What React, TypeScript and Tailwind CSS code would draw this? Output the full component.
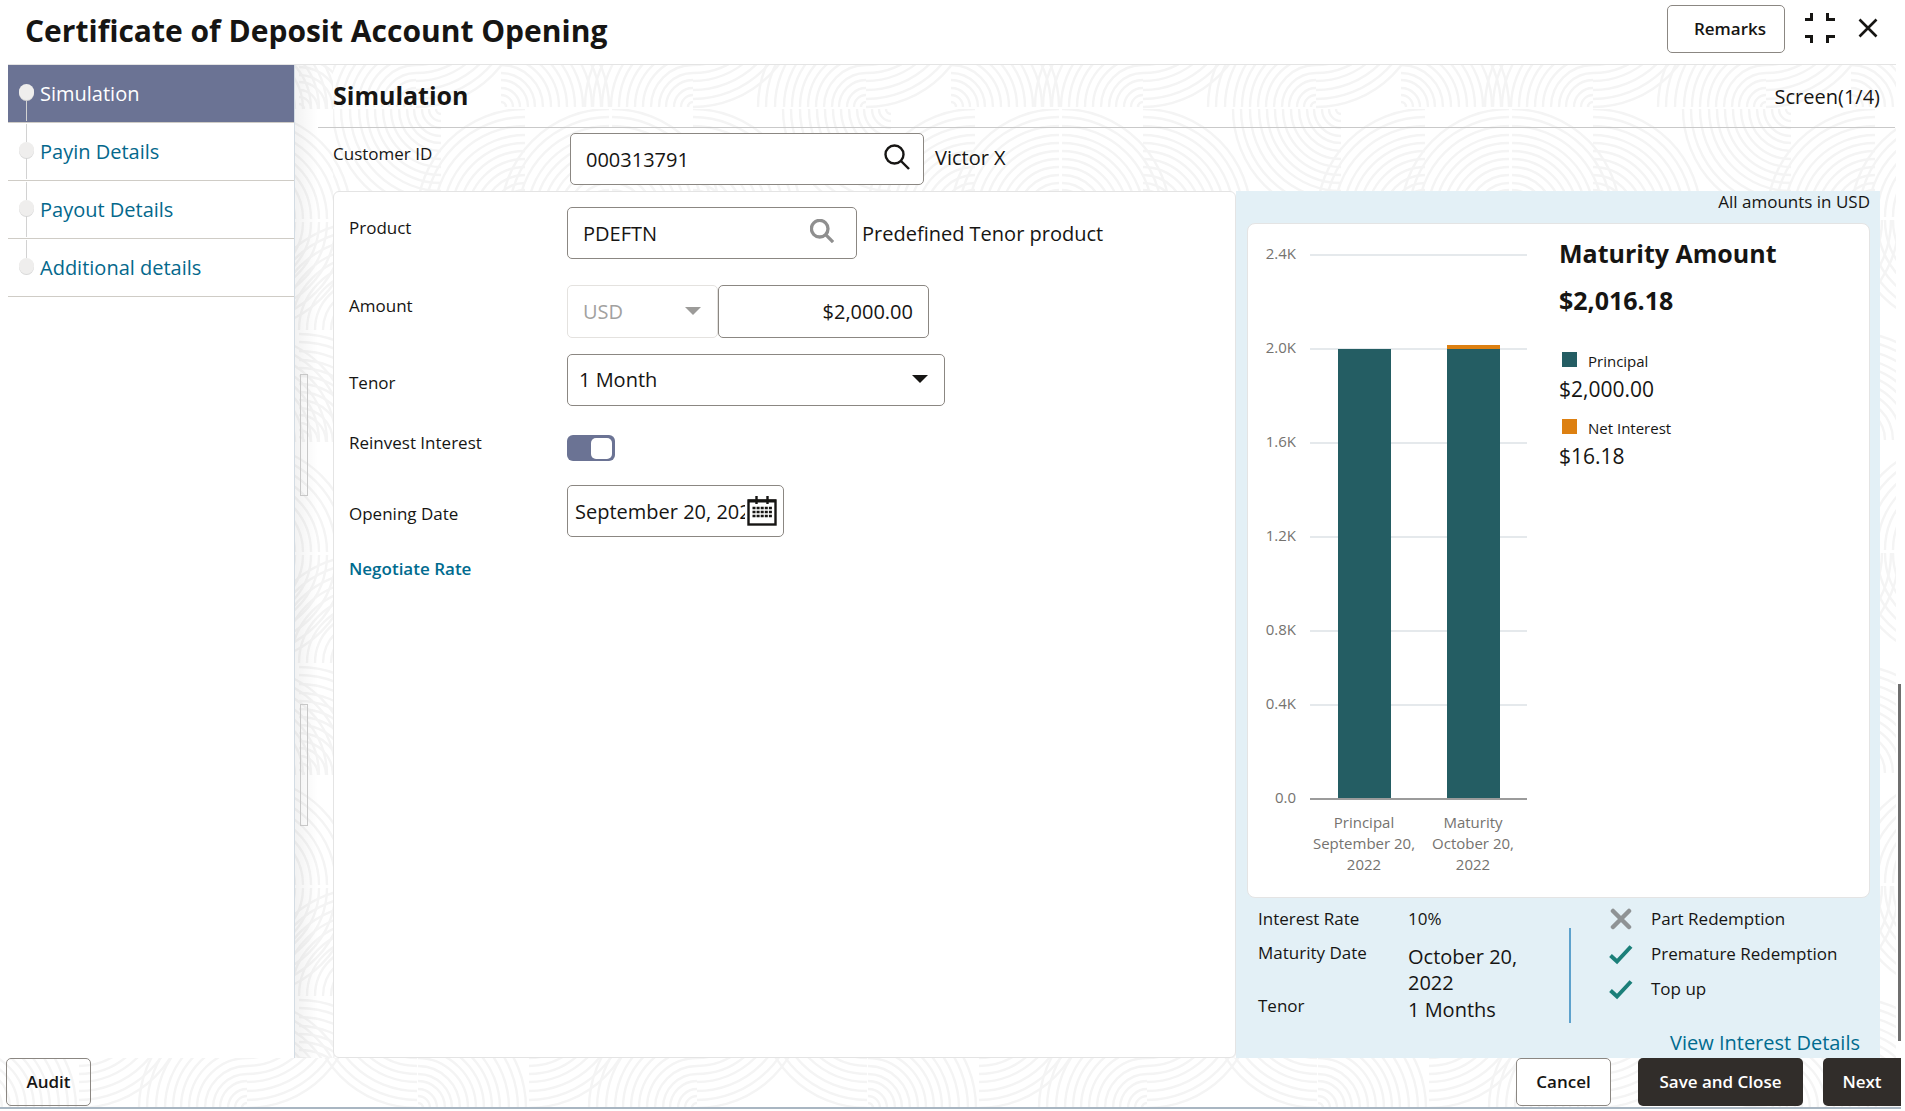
import React from 'react';
import { clsx } from 'clsx';

type Corner = 'tl' | 'tr' | 'bl' | 'br';
type Quarter = [x: number, y: number, corner: Corner];

const RINGS = [5, 12, 19, 27, 34, 42, 50, 58, 66, 74, 82, 91, 100, 108];

const arc = (x: number, y: number, r: number, corner: Corner) => {
    const dx = corner === 'tr' || corner === 'br' ? r : -r;
    const dy = corner === 'bl' || corner === 'br' ? r : -r;
    return `M${x + dx} ${y}A${r} ${r} 0 0 ${dx * dy > 0 ? 1 : 0} ${x} ${y + dy}`;
};

const mainQuarters: Quarter[] = [
    [0, 108, 'tr'],
    [369, 108, 'tr'],
    [-81, 108, 'tr'],
    [198, 0, 'bl'],
    [282, 108, 'tl'],
    [366, 108, 'tl'],
    [0, 111, 'br'],
    [198, 111, 'br'],
    [366, 111, 'bl'],
    [0, 223, 'br'],
    [173, 223, 'br'],
    [0, 331, 'tl'],
    [450, 331, 'tl'],
    [173, 331, 'tl'],
    [258, 331, 'tr'],
];

const gutterQuarters: Quarter[] = [
    [-50, 108, 'tr'],
    [-50, 111, 'br'],
    [70, 219, 'tl'],
    [4, 331, 'tr'],
    [-50, 331, 'tr'],
];

const footerQuarters: Quarter[] = [
    [0, 50, 'tl'],
    [450, 50, 'tl'],
    [0, -58, 'br'],
    [170, -58, 'bl'],
    [171, 50, 'tr'],
    [282, -58, 'br'],
];

interface SwirlsProps {
    id: string;
    quarters: Quarter[];
    x: number;
    y: number;
    height?: number;
}

const Swirls: React.FC<SwirlsProps> = ({ id, quarters, x, y, height = 333 }) => (
    <svg className="absolute inset-0 w-full h-full pointer-events-none" aria-hidden="true">
        <defs>
            <pattern id={id} x={x} y={y} width="450" height={height} patternUnits="userSpaceOnUse">
                <g fill="none" stroke="#f4f4f4" strokeWidth="2.4">
                    {quarters.map(([qx, qy, corner], i) => (
                        <path key={i} d={RINGS.map((r) => arc(qx, qy, r, corner)).join('')} />
                    ))}
                </g>
            </pattern>
        </defs>
        <rect width="100%" height="100%" fill={`url(#${id})`} />
    </svg>
);

const steps = ['Simulation', 'Payin Details', 'Payout Details', 'Additional details'];

const Sidebar: React.FC = () => (
    <nav className="w-[287px] shrink-0 bg-white border-r border-[#d3dce4]" aria-label="Steps">
        <ol>
            {steps.map((step, i) => (
                <li
                    key={step}
                    className={clsx('h-[58px] border-b border-[#cfccc6] flex pl-[11px] gap-[6px]', i === 0 && 'bg-[#6b7394]')}
                >
                    <span className="w-[15px] py-px flex flex-col items-center" aria-hidden="true">
                        <span className={clsx('w-px h-[18px]', i > 0 && 'bg-[#d2d2d2]')} />
                        <span className="w-[15px] h-4 rounded-full bg-[#efeeed] shadow-[0_1px_0_#d8d8d8]" />
                        <span className={clsx('w-px flex-1', i < steps.length - 1 && 'bg-[#d2d2d2]')} />
                    </span>
                    <a
                        href="#"
                        aria-current={i === 0 ? 'step' : undefined}
                        className={clsx('text-[20px] leading-[58px]', i === 0 ? 'text-white' : 'text-[#04688c]')}
                    >
                        {step}
                    </a>
                </li>
            ))}
        </ol>
    </nav>
);

const Gutter: React.FC = () => (
    <div className="relative w-[38px] shrink-0 bg-white">
        <Swirls id="gutter-swirls" quarters={gutterQuarters} x={0} y={46} />
        <div className="relative h-full bg-linear-to-r from-black/5 to-transparent to-60% pt-[309px] pl-[5px] flex flex-col gap-[208px]">
            <div className="w-2 h-[122px] border border-[#c8c8c8]" />
            <div className="w-2 h-[122px] border border-[#c8c8c8]" />
        </div>
    </div>
);

const SearchIcon: React.FC<{ className: string; width: number }> = ({ className, width }) => (
    <svg viewBox="0 0 26 26" className={className} fill="none" stroke="currentColor" strokeWidth={width}>
        <circle cx="10.5" cy="10.5" r="9" />
        <path d="M17 17L25 25" />
    </svg>
);

const Caret: React.FC<{ className: string }> = ({ className }) => (
    <svg viewBox="0 0 16 8" className={clsx('absolute w-4 h-2 pointer-events-none', className)} fill="currentColor">
        <path d="M0 0H16L8 8Z" />
    </svg>
);

const CalendarIcon: React.FC = () => (
    <svg viewBox="0 0 30 30" className="w-[30px] h-[30px]" fill="none" stroke="currentColor">
        <rect x="1.5" y="4.5" width="27" height="24" strokeWidth="2.4" />
        <path d="M1 5H29" strokeWidth="3" />
        <path d="M9.5 0V8M20.5 0V8" strokeWidth="2.4" />
        <path d="M5.5 12H25M5.5 16H25M5.5 20H25" strokeWidth="2.6" strokeDasharray="3 1.1" />
    </svg>
);

const field = 'block bg-white border border-[#8b8782] rounded-[5px] text-[20px] text-[#161513] outline-none';
const labelText = 'text-[17px] leading-[26px] font-medium text-[#161513]';

interface RowProps {
    label: string;
    htmlFor: string;
    offset?: string;
    children: React.ReactNode;
}

const Row: React.FC<RowProps> = ({ label, htmlFor, offset = 'pt-2', children }) => (
    <div className="flex items-start">
        <label htmlFor={htmlFor} className={clsx('w-[218px] shrink-0', labelText, offset)}>
            {label}
        </label>
        {children}
    </div>
);

const ProductForm: React.FC = () => (
    <section className="flex-1 min-w-0 bg-white border border-[#e4e4e4] rounded-md p-[15px]">
        <Row label="Product" htmlFor="product">
            <div className="relative">
                <input id="product" defaultValue="PDEFTN" className={clsx(field, 'w-[290px] h-[52px] pl-[15px] pr-12')} />
                <button aria-label="Search product" className="absolute right-[23px] top-3 text-[#8f8f8f]">
                    <SearchIcon className="w-6 h-6" width={3.6} />
                </button>
            </div>
            <span className="pl-[5px] pt-[11px] text-[20px] leading-8">Predefined Tenor product</span>
        </Row>
        <div className="h-[26px]" />
        <Row label="Amount" htmlFor="amount">
            <div className="relative">
                <select
                    aria-label="Currency"
                    disabled
                    className="block appearance-none w-[151px] h-[53px] pl-[15px] border border-[#e4e2df] rounded-[5px] text-[20px] text-[#a2a19f] opacity-100"
                >
                    <option>USD</option>
                </select>
                <Caret className="right-[17px] top-[22px] text-[#9c9b99]" />
            </div>
            <input id="amount" defaultValue="$2,000.00" className={clsx(field, 'w-[211px] h-[53px] px-[15px] text-right')} />
        </Row>
        <div className="h-4" />
        <Row label="Tenor" htmlFor="tenor" offset="pt-4">
            <div className="relative">
                <select id="tenor" className={clsx(field, 'appearance-none w-[378px] h-[52px] pl-[11px]')}>
                    <option>1 Month</option>
                </select>
                <Caret className="right-[17px] top-[21px] text-[#161513]" />
            </div>
        </Row>
        <div className="h-[21px]" />
        <Row label="Reinvest Interest" htmlFor="reinvest" offset="pt-[3px]">
            <input
                id="reinvest"
                type="checkbox"
                role="switch"
                defaultChecked
                className="appearance-none w-12 h-[26px] mt-2 rounded-md bg-[#6b7394] flex items-center justify-end pr-[3px] before:block before:w-[21px] before:h-[21px] before:rounded-[5px] before:bg-white"
            />
        </Row>
        <div className="h-6" />
        <Row label="Opening Date" htmlFor="opening-date" offset="pt-4">
            <div className={clsx(field, 'w-[217px] h-[52px] pl-[7px] flex items-center gap-[2px]')}>
                <input
                    id="opening-date"
                    defaultValue="September 20, 2022"
                    className="block w-[170px] h-[50px] outline-none text-[20px]"
                />
                <button aria-label="Open calendar" className="text-[#161513]">
                    <CalendarIcon />
                </button>
            </div>
        </Row>
        <a href="#" className="inline-block mt-5 text-[17px] leading-6 font-semibold text-[#006b8f]">
            Negotiate Rate
        </a>
    </section>
);

const ticks = [
    { label: '2.4K', y: 31 },
    { label: '2.0K', y: 125 },
    { label: '1.6K', y: 219 },
    { label: '1.2K', y: 313 },
    { label: '0.8K', y: 407 },
    { label: '0.4K', y: 481 },
];

const bars = [
    { x: 90, lines: ['Principal', 'September 20,', '2022'], interest: false },
    { x: 199, lines: ['Maturity', 'October 20,', '2022'], interest: true },
];

const MaturityChart: React.FC = () => (
    <svg width="280" height="673" viewBox="0 0 280 673" className="shrink-0 text-[15px]" fill="#75736f" role="img" aria-label="Principal and maturity amounts">
        {ticks.map(({ label, y }) => (
            <g key={label}>
                <text x="48" y={y + 4} textAnchor="end">{label}</text>
                <rect x="62" y={y - 1} width="217" height="2" fill="#e5e9ec" />
            </g>
        ))}
        <text x="48" y="579" textAnchor="end">0.0</text>
        {bars.map(({ x, lines, interest }) => (
            <g key={x}>
                <rect x={x} y="125" width="53" height="449" fill="#245d63" />
                {interest && <rect x={x} y="121" width="53" height="4" fill="#dd8011" />}
                {lines.map((line, i) => (
                    <text key={i} x={x + 26} y={604 + i * 21} textAnchor="middle">{line}</text>
                ))}
            </g>
        ))}
        <rect x="62" y="574" width="217" height="2" fill="#9b9b9b" />
    </svg>
);

const LegendItem: React.FC<{ swatch: string; label: string; amount: string }> = ({ swatch, label, amount }) => (
    <div className="h-[67px]">
        <dt className="flex items-start gap-[11px] pl-[3px] text-[15px] leading-6">
            <span className={clsx('w-[15px] h-[15px] mt-[3px]', swatch)} />
            {label}
        </dt>
        <dd className="text-[21px] leading-8 font-medium">{amount}</dd>
    </div>
);

const CrossIcon = () => (
    <svg viewBox="0 0 24 22" className="w-6 h-[22px]" stroke="#8f9395" strokeWidth="4.5" fill="none" strokeLinecap="round">
        <path d="M4 3L20 19M20 3L4 19" />
    </svg>
);

const TickIcon = () => (
    <svg viewBox="0 0 24 22" className="w-6 h-[22px]" stroke="#1b7f79" strokeWidth="4" fill="none">
        <path d="M1.5 12.5L8 18.5L22 3.5" />
    </svg>
);

const features = [
    { label: 'Part Redemption', allowed: false },
    { label: 'Premature Redemption', allowed: true },
    { label: 'Top up', allowed: true },
];

const Summary: React.FC = () => (
    <aside className="w-[644px] shrink-0 bg-[#e3f0f6] pl-[11px] pr-[10px]">
        <p className="h-8 text-right text-[17px] leading-[22px] font-medium">All amounts in USD</p>
        <div className="bg-white border border-[#e4e4e4] rounded-lg flex gap-[31px]">
            <MaturityChart />
            <div>
                <h3 className="pt-[11px] text-[25px] leading-[36px] font-bold">Maturity Amount</h3>
                <p className="pt-[11px] text-[25px] leading-[36px] font-bold">$2,016.18</p>
                <dl className="pt-[31px]">
                    <LegendItem swatch="bg-[#245d63]" label="Principal" amount="$2,000.00" />
                    <LegendItem swatch="bg-[#dd8011]" label="Net Interest" amount="$16.18" />
                </dl>
            </div>
        </div>
        <div className="flex h-[130px] pl-[11px] pt-2">
            <dl className="grid grid-cols-[150px_150px] grid-rows-[34px_53px_26px] w-[311px] shrink-0">
                <dt className={labelText}>Interest Rate</dt>
                <dd className={labelText}>10%</dd>
                <dt className={labelText}>Maturity Date</dt>
                <dd className="text-[20px] leading-[26px] pt-1 w-[130px]">October 20, 2022</dd>
                <dt className={labelText}>Tenor</dt>
                <dd className="text-[20px] leading-[26px] pt-1">1 Months</dd>
            </dl>
            <div className="w-[2px] h-[95px] mt-[22px] bg-[#5ea2cd]" />
            <ul className="pl-[38px] flex flex-col gap-[9px]">
                {features.map(({ label, allowed }) => (
                    <li key={label} className={clsx('flex items-center gap-[18px]', labelText)}>
                        {allowed ? <TickIcon /> : <CrossIcon />}
                        {label}
                    </li>
                ))}
            </ul>
        </div>
        <div className="text-right pt-px pr-[10px] pb-px">
            <a href="#" className="text-[20px] leading-7 text-[#006b8f]">View Interest Details</a>
        </div>
    </aside>
);

const Header: React.FC = () => (
    <header className="h-[65px] bg-white border-b border-[#e4e4e4] flex items-start pl-[17px] pr-[18px]">
        <h1 className="text-[30px] leading-[62px] font-bold">Certificate of Deposit Account Opening</h1>
        <button className="ml-auto mt-[5px] w-[118px] h-12 pl-2 border border-[#8b8782] rounded-[5px] text-[17px] font-semibold">
            Remarks
        </button>
        <button aria-label="Exit full screen" className="ml-5 mt-[13px]">
            <svg viewBox="0 0 30 30" className="w-[30px] h-[30px]" fill="none" stroke="currentColor" strokeWidth="3">
                <path d="M0 6.5H6.5V0M30 6.5H22.5V0M0 23.5H6.5V30M30 23.5H22.5V30" />
            </svg>
        </button>
        <button aria-label="Close" className="ml-[23px] mt-[18px]">
            <svg viewBox="0 0 20 20" className="w-5 h-5" fill="none" stroke="currentColor" strokeWidth="2.6">
                <path d="M1.5 1.5L18.5 18.5M18.5 1.5L1.5 18.5" />
            </svg>
        </button>
    </header>
);

const Footer: React.FC = () => (
    <footer className="relative border-b-2 border-[#a9b6c2]">
        <Swirls id="footer-swirls" quarters={footerQuarters} x={247} y={0} height={50} />
        <div className="relative flex h-[49px] pl-[6px] text-[17px] font-semibold">
            <button className="w-[85px] h-12 border border-[#8b8782] rounded-[5px]">Audit</button>
            <button className="ml-auto w-[95px] h-12 bg-white border border-[#8b8782] rounded-[5px]">Cancel</button>
            <button className="ml-[27px] w-[165px] h-12 bg-[#312d2a] text-white rounded-[5px]">Save and Close</button>
            <button className="ml-5 w-[78px] h-12 bg-[#312d2a] text-white rounded-l-[5px]">Next</button>
        </div>
    </footer>
);

export default function App() {
    return (
        <div className="relative bg-white pr-1 text-[#161513] font-['Open_Sans','Noto_Sans',sans-serif]">
            <div className="pl-2 pr-[5px]">
                <Header />
                <div className="relative flex">
                    <Swirls id="main-swirls" quarters={mainQuarters} x={235} y={44} />
                    <div className="relative flex w-[325px] shrink-0">
                        <Sidebar />
                        <Gutter />
                    </div>
                    <main className="relative flex-1 min-w-0 pr-4">
                        <div className="h-[63px] -ml-[15px] -mr-[15px] pl-[15px] pr-[15px] border-b border-[#c9c9c9] flex items-center justify-between">
                            <h2 className="text-[25px] font-bold">Simulation</h2>
                            <span className="pt-[2px] text-[20px]">Screen(1/4)</span>
                        </div>
                        <div className="flex items-start pt-[5px] h-[63px]">
                            <label htmlFor="customer-id" className={clsx('w-[237px] pt-2', labelText)}>
                                Customer ID
                            </label>
                            <div className="relative">
                                <input id="customer-id" defaultValue="000313791" className={clsx(field, 'w-[354px] h-[52px] pl-[15px] pr-14')} />
                                <button aria-label="Search customer" className="absolute right-[14px] top-[11px]">
                                    <SearchIcon className="w-[26px] h-[26px]" width={2.4} />
                                </button>
                            </div>
                            <span className="pl-[11px] pt-[9px] text-[20px] leading-8">Victor X</span>
                        </div>
                        <div className="flex">
                            <ProductForm />
                            <Summary />
                        </div>
                    </main>
                </div>
            </div>
            <Footer />
            <div className="absolute right-1 top-[684px] w-[3px] h-[357px] bg-[#6f6f6f]" />
        </div>
    );
}
